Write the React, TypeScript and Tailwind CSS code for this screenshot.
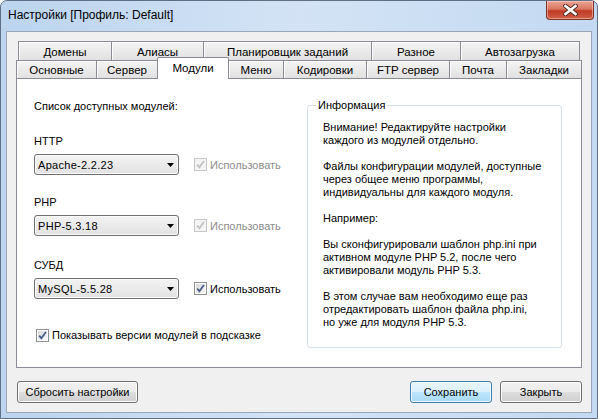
type TabDef = { label: string; w: string; active?: boolean };

const TOP_ROW: TabDef[] = [
  { label: "Домены", w: "w-[93px]" },
  { label: "Алиасы", w: "w-[92px]" },
  { label: "Планировщик заданий", w: "w-[168px]" },
  { label: "Разное", w: "w-[89px]" },
  { label: "Автозагрузка", w: "w-[120px]" },
];

const FRONT_ROW: TabDef[] = [
  { label: "Основные", w: "w-[80px]" },
  { label: "Сервер", w: "w-[61px]" },
  { label: "Модули", w: "w-[72px]", active: true },
  { label: "Меню", w: "w-[54px]" },
  { label: "Кодировки", w: "w-[83px]" },
  { label: "FTP сервер", w: "w-[83px]" },
  { label: "Почта", w: "w-[57px]" },
  { label: "Закладки", w: "w-[76px]" },
];

function Tab({ tab, last, afterActive }: { tab: TabDef; last: boolean; afterActive?: boolean }) {
  if (tab.active) {
    return (
      <div
        className={`${tab.w} relative z-10 -mb-px flex h-[22px] shrink-0 justify-center rounded-t-[2px] border-x border-t border-[#898c95] bg-white pt-[3px] text-[11.5px] leading-[14px]`}
      >
        {tab.label}
      </div>
    );
  }
  return (
    <div
      className={`${tab.w} flex h-full shrink-0 items-center justify-center border-t border-[#898c95] bg-linear-to-b from-[#f4f4f4] to-[#e1e1e1] pt-px text-[11.5px] leading-[14px] shadow-[inset_1px_1px_0_#fcfcfc] ${afterActive ? "" : "border-l"} ${last ? "border-r" : ""}`}
    >
      {tab.label}
    </div>
  );
}

function Checkbox({ checked, disabled }: { checked?: boolean; disabled?: boolean }) {
  return (
    <span
      className={`relative inline-flex h-[13px] w-[13px] shrink-0 border p-px ${
        disabled ? "border-[#c6c6c6] bg-[#f4f4f4]" : "border-[#8e8f8f] bg-white"
      }`}
    >
      <span
        className={`block h-full w-full ${
          disabled ? "bg-[#f4f4f4]" : "bg-linear-to-br from-[#d9d9d9] to-[#f8f8f8]"
        }`}
      />
      {checked && (
        <svg viewBox="0 0 11 11" className="absolute left-0 top-0 h-[11px] w-[11px]">
          <path
            d="M2.2 5.6 L4.4 8.2 L8.9 2"
            fill="none"
            stroke={disabled ? "#c2c2c2" : "#4a5e8c"}
            strokeWidth="1.8"
          />
        </svg>
      )}
    </span>
  );
}

function Combo({ value }: { value: string }) {
  return (
    <div className="flex h-[21px] w-[145px] shrink-0 items-center justify-between rounded-[3px] border border-[#707070] bg-linear-to-b from-[#f3f3f3] to-[#e2e2e2] pl-[3px] pr-[4px] shadow-[inset_0_0_0_1px_#fbfbfb]">
      <span className="leading-[14px] tracking-[0.3px]">{value}</span>
      <svg width="7" height="4" viewBox="0 0 7 4">
        <path d="M0 0h7L3.5 4z" fill="#000" />
      </svg>
    </div>
  );
}

function ModuleRow({ title, value, checked, disabled, gap }: { title: string; value: string; checked: boolean; disabled?: boolean; gap: string }) {
  return (
    <>
      <div className={`${gap} h-[14px] leading-[14px]`}>{title}</div>
      <div className="mt-[6px] flex items-center">
        <Combo value={value} />
        <label className={`ml-[15px] flex items-center gap-[3px] leading-[14px] ${disabled ? "text-[#8b8b8b]" : ""}`}>
          <Checkbox checked={checked} disabled={disabled} />
          Использовать
        </label>
      </div>
    </>
  );
}

function Button({ children, w, primary, className = "" }: { children: string; w: string; primary?: boolean; className?: string }) {
  return (
    <button
      className={`${w} ${className} flex h-[22px] items-center justify-center rounded-[3px] border leading-[14px] ${
        primary
          ? "border-[#3c7fb1] bg-[linear-gradient(#eaf6fd_0%,#d9f0fc_50%,#bee6fd_50%,#a7d9f5_100%)] shadow-[inset_0_0_0_1px_#f0fafe]"
          : "border-[#707070] bg-[linear-gradient(#f2f2f2_0%,#ebebeb_50%,#dddddd_50%,#cfcfcf_100%)] shadow-[inset_0_0_0_1px_#fbfbfb]"
      }`}
    >
      {children}
    </button>
  );
}

const INFO: string[][] = [
  ["Внимание! Редактируйте настройки", "каждого из модулей отдельно."],
  ["Файлы конфигурации модулей, доступные", "через общее меню программы,", "индивидуальны для каждого модуля."],
  ["Например:"],
  ["Вы сконфигурировали шаблон php.ini при", "активном модуле PHP 5.2, после чего", "активировали модуль PHP 5.3."],
  ["В этом случае вам необходимо еще раз", "отредактировать шаблон файла php.ini,", "но уже для модуля PHP 5.3."],
];

export default function App() {
  return (
    <div className="h-[419px] w-[598px] overflow-hidden bg-white font-['Liberation_Sans',Arial,sans-serif] text-[11px] text-black">
      <div className="flex h-[419px] w-[598px] flex-col rounded-t-[7px] border border-[#5f6f86] bg-linear-to-r from-[#bcd4ee] via-[#d3e3f5] to-[#c3d9f1] px-[5px] pb-[5px]">
        {/* title bar */}
        <div className="flex h-[30px] shrink-0 items-start justify-between">
          <span className="ml-[2px] mt-[7px] text-[12px] leading-[15px]">Настройки [Профиль: Default]</span>
          <div className="-mr-[2px] flex h-[19px] w-[48px] items-center justify-center rounded-b-[4px] border border-t-0 border-[#7c3226] bg-[linear-gradient(#eaa494_0%,#d9765f_45%,#c03a24_55%,#cf5f48_100%)] shadow-[inset_0_0_0_1px_rgba(255,220,210,0.5)]">
            <svg width="15" height="12" viewBox="0 0 15 12">
              <path
                d="M2.5 2 L12.5 10 M12.5 2 L2.5 10"
                stroke="#4e2a24"
                strokeWidth="4.4"
                strokeLinecap="square"
              />
              <path d="M2.5 2 L12.5 10 M12.5 2 L2.5 10" stroke="#fff" strokeWidth="2.6" strokeLinecap="square" />
            </svg>
          </div>
        </div>

        {/* client area */}
        <div className="flex flex-1 flex-col border border-[#98a6b8] bg-[#f0f0f0] p-[9px]">
          <div className="flex h-[19px] px-[2px]">
            {TOP_ROW.map((t, i) => (
              <Tab key={t.label} tab={t} last={i === TOP_ROW.length - 1} />
            ))}
          </div>
          <div className="flex h-[18px] items-end">
            {FRONT_ROW.map((t, i) => (
              <Tab
                key={t.label}
                tab={t}
                last={i === FRONT_ROW.length - 1}
                afterActive={i > 0 && FRONT_ROW[i - 1].active}
              />
            ))}
          </div>

          <div className="flex h-[290px] border border-[#898c95] bg-white">
            <div className="flex flex-col pl-[17px]">
              <div className="mt-[20px] h-[14px] leading-[14px]">Список доступных модулей:</div>
              <ModuleRow gap="mt-[21px]" title="HTTP" value="Apache-2.2.23" checked disabled />
              <ModuleRow gap="mt-[20px]" title="PHP" value="PHP-5.3.18" checked disabled />
              <ModuleRow gap="mt-[22px]" title="СУБД" value="MySQL-5.5.28" checked />
              <label className="ml-[2px] mt-[29px] flex items-center gap-[3px] leading-[14px]">
                <Checkbox checked />
                Показывать версии модулей в подсказке
              </label>
            </div>

            <div className="relative ml-auto mr-[19px] mt-[26px] h-[243px] w-[255px] rounded-[3px] border border-[#d5dfe5]">
              <span className="absolute -top-[8px] left-[8px] bg-white px-[2px] leading-[14px]">Информация</span>
              <div className="flex flex-col gap-[13px] pl-[15px] pt-[15px] leading-[13px]">
                {INFO.map((para, i) => (
                  <div key={i}>
                    {para.map((line) => (
                      <div key={line} className="whitespace-nowrap">
                        {line}
                      </div>
                    ))}
                  </div>
                ))}
              </div>
            </div>
          </div>

          <div className="mt-[13px] flex items-center">
            <Button w="w-[121px]" className="ml-px">
              Сбросить настройки
            </Button>
            <Button w="w-[82px]" primary className="ml-auto">
              Сохранить
            </Button>
            <Button w="w-[82px]" className="ml-[8px]">
              Закрыть
            </Button>
          </div>
        </div>
      </div>
    </div>
  );
}
